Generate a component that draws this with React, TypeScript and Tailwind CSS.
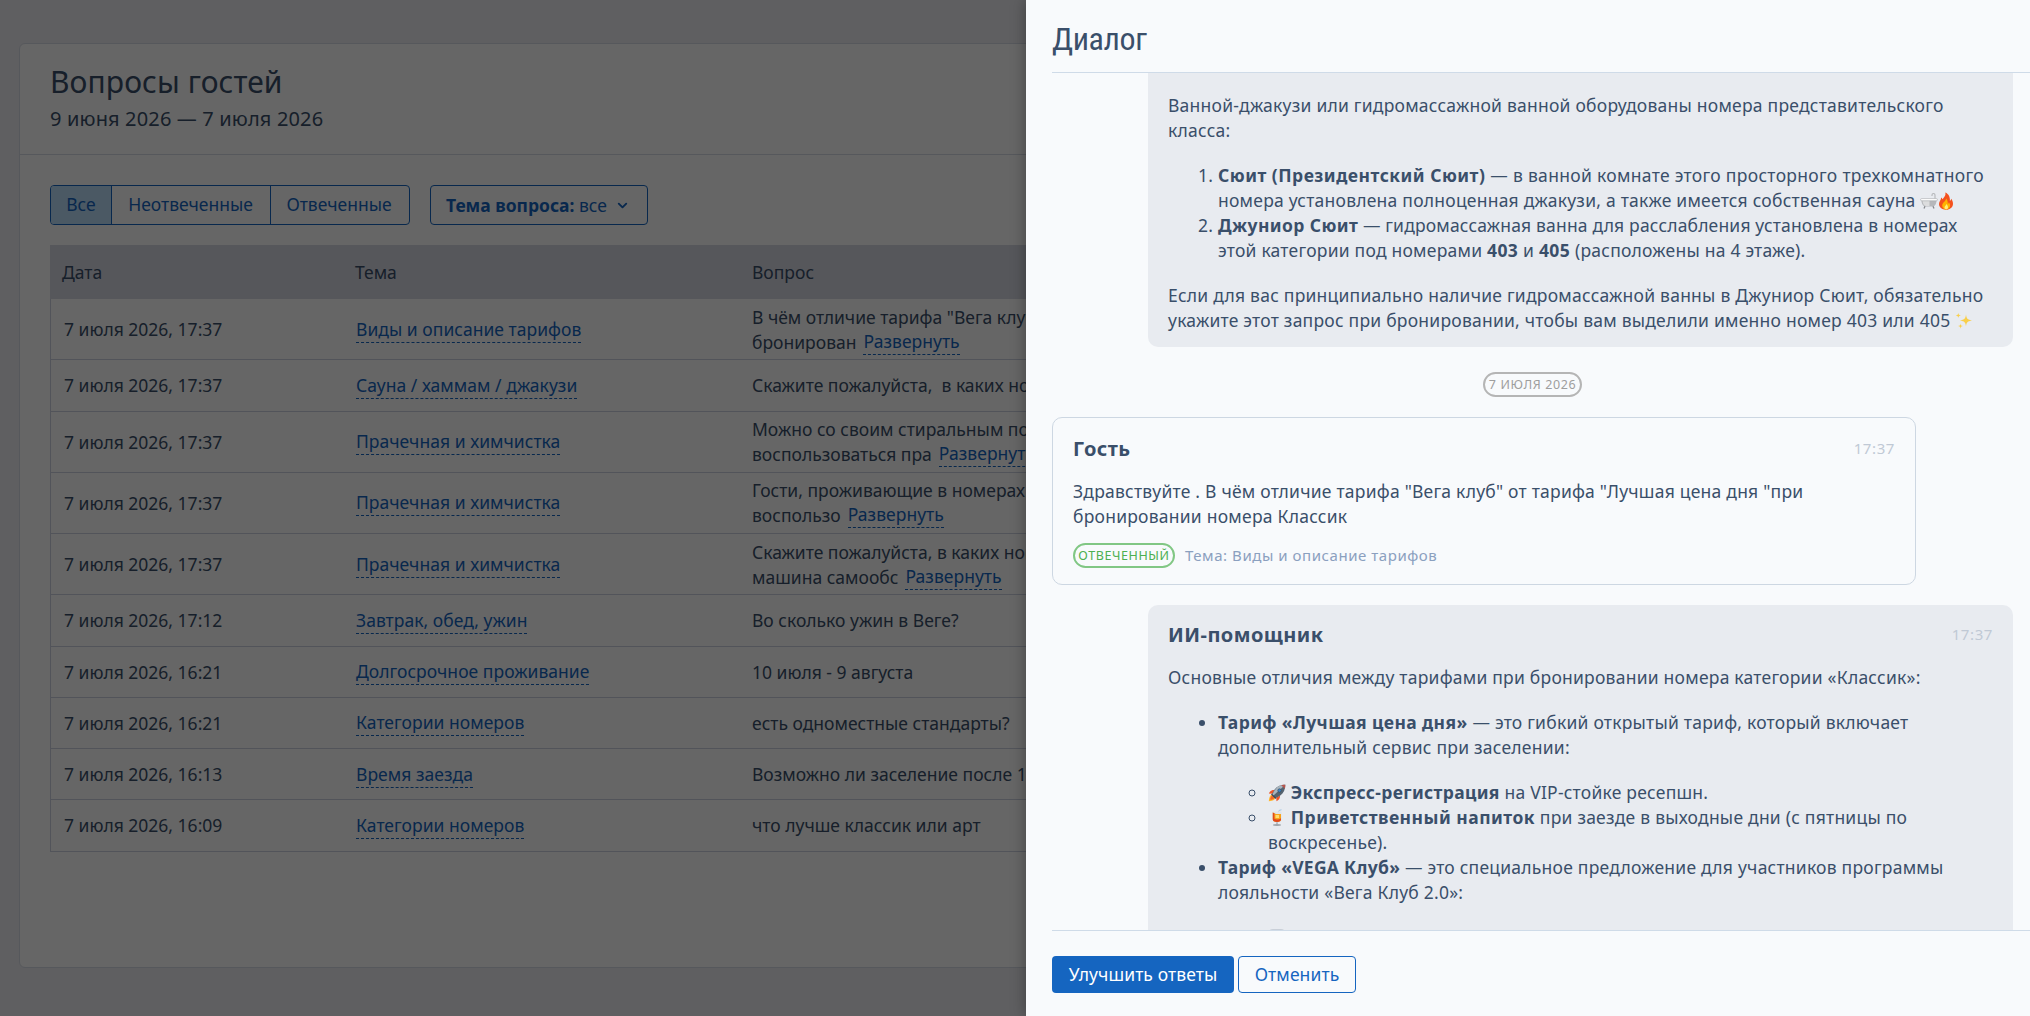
import { ChevronDown } from 'lucide-react'
import type { ReactNode } from 'react'

interface Row {
  date: string
  topic: string
  lines: string[]
  more?: boolean
}

const rows: Row[] = [
  { date: '7 июля 2026, 17:37', topic: 'Виды и описание тарифов', lines: ['В чём отличие тарифа "Вега клуб"', 'бронирован'], more: true },
  { date: '7 июля 2026, 17:37', topic: 'Сауна / хаммам / джакузи', lines: ['Скажите пожалуйста,  в каких номерах'] },
  { date: '7 июля 2026, 17:37', topic: 'Прачечная и химчистка', lines: ['Можно со своим стиральным порошком', 'воспользоваться пра'], more: true },
  { date: '7 июля 2026, 17:37', topic: 'Прачечная и химчистка', lines: ['Гости, проживающие в номерах', 'воспользо'], more: true },
  { date: '7 июля 2026, 17:37', topic: 'Прачечная и химчистка', lines: ['Скажите пожалуйста, в каких номерах', 'машина самообс'], more: true },
  { date: '7 июля 2026, 17:12', topic: 'Завтрак, обед, ужин', lines: ['Во сколько ужин в Веге?'] },
  { date: '7 июля 2026, 16:21', topic: 'Долгосрочное проживание', lines: ['10 июля - 9 августа'] },
  { date: '7 июля 2026, 16:21', topic: 'Категории номеров', lines: ['есть одноместные стандарты?'] },
  { date: '7 июля 2026, 16:13', topic: 'Время заезда', lines: ['Возможно ли заселение после 12'] },
  { date: '7 июля 2026, 16:09', topic: 'Категории номеров', lines: ['что лучше классик или арт'] },
]

function DashedLink({ children }: { children: ReactNode }) {
  return <a className="inline-block h-[25px] leading-[22px] border-b border-dashed border-[#1565c0] text-[#1565c0] tracking-[0.03px]">{children}</a>
}

function B({ children }: { children: ReactNode }) {
  return <b className="tracking-[0.4px]">{children}</b>
}

/* EMOJI */
function Bathtub() {
  return (
    <svg viewBox="0 0 18 18" className="inline-block w-[18px] h-[18px] align-[-3px]">
      <path d="M15 8V3c0-2-3-2-3 0v1" fill="none" stroke="#b4b7ba" strokeWidth="1.1" />
      <path d="M1.5 8h15c0 4-1.6 6.5-4.3 6.5H5.8C3.1 14.5 1.5 12 1.5 8Z" fill="#b6b8bb" />
      <path d="M2.500 8.500h7v5.500H5.800C3.900 13.800 2.800 12 2.500 8.500Z" fill="#dcddde" />
      <rect x=".6" y="6.6" width="16.8" height="2.2" rx="1.1" fill="#fff" stroke="#a5a8ab" strokeWidth=".6" />
      <path d="M5 14.300L4 16.600M13 14.300l1 2.300" stroke="#85888c" strokeWidth="1.3" />
    </svg>
  )
}

function Fire() {
  return (
    <svg viewBox="0 0 18 18" className="inline-block w-[18px] h-[18px] -ml-[1px] align-[-3px]">
      <path d="M8.300.5c.7 3.300-1.300 4.500-2.700 6.700-.5-.8-.8-1.300-1.500-1.800C4.200 8 2 9.300 2 12c0 3.400 3 5.700 7 5.700s7-2.500 7-6c0-2-.9-3.400-1.700-4.900-.2 1-.7 1.700-1.400 2.100C13.200 5.200 11.800 1.900 8.300.5Z" fill="#f4511e" />
      <path d="M9 6.500c.5 2.200-3.800 4-3.800 7.100 0 2.400 1.700 3.900 3.900 3.900s4-1.500 4-3.900c0-1.400-.5-2.400-1.200-3.300-.2.900-.5 1.400-1.100 1.700.1-2.300-.4-4.200-1.800-5.500Z" fill="#ffb300" />
      <path d="M9.200 12c.3 1.200-1.700 2-1.700 3.600 0 1.100.7 1.700 1.700 1.700s1.800-.7 1.800-1.800c0-1.300-.8-2.700-1.800-3.500Z" fill="#ffee7a" />
    </svg>
  )
}

function Sparkles() {
  return (
    <svg viewBox="0 0 18 18" className="inline-block w-[18px] h-[18px] align-[-3px]" fill="#f9cf4a">
      <path d="M11 2.500c.6 4.200 1.300 5.100 6 5.900-4.700.8-5.400 1.700-6 5.900-.6-4.200-1.300-5.100-6-5.900 4.700-.8 5.400-1.700 6-5.900Z" />
      <path d="M3.300.8c.3 1.900.6 2.300 2.600 2.600-2 .3-2.300.7-2.600 2.600C3 4.100 2.700 3.700.7 3.400 2.700 3.100 3 2.700 3.300.8ZM5.500 11.500c.3 1.900.6 2.300 2.600 2.600-2 .3-2.300.7-2.600 2.600-.3-1.900-.6-2.300-2.600-2.600 2-.3 2.300-.7 2.600-2.600Z" />
    </svg>
  )
}

function Rocket() {
  return (
    <svg viewBox="0 0 18 18" className="inline-block w-[18px] h-[18px] align-[-3px]">
      <path d="M4 10.500C1.800 11.500 1 14 .8 17.200c3.200-.2 5.600-1 6.500-3.300Z" fill="#ffb52b" />
      <path d="M4 11.500c-1.200.8-1.600 2.200-1.800 4.200 2-.1 3.400-.6 4.100-1.800Z" fill="#f4632a" />
      <path d="M6.500 6C3.800 5.700 2 7 .8 9.500l3.700.3ZM12 11.500c.3 2.700-1 4.500-3.500 5.700l-.3-3.700Z" fill="#f0562a" />
      <path d="M17.300.7C12.500.6 9 2.400 6.400 5.700L3.700 10.500l3.800 3.800 4.800-2.700c3.300-2.600 5.100-6.100 5-10.900Z" fill="#55636f" />
      <path d="M17.300.7C14 .6 11.500 1.400 9.300 3L6.500 6.500l-2.300 4.200 1 1Z" fill="#a9b5be" />
      <path d="M17.300.7c-1.500 0-2.900.1-4.100.5l3.600 3.600c.4-1.300.5-2.600.5-4.100Z" fill="#b5564e" />
      <circle cx="11.5" cy="6.5" r="1.7" fill="#3f86c6" stroke="#2f4258" strokeWidth=".6" />
      <path d="M3.500 10.200l4.300 4.300" stroke="#3b4855" strokeWidth="1.2" />
    </svg>
  )
}

function Drink() {
  return (
    <svg viewBox="0 0 18 18" className="inline-block w-[18px] h-[18px] align-[-3px]">
      <path d="M9.500 6l1.600-4.600 2.400-.6" fill="none" stroke="#9cc4e4" strokeWidth=".9" />
      <path d="M4.500 2.500h9v8c0 2-1.500 3-4.500 3s-4.500-1-4.500-3Z" fill="#dfe4e8" />
      <path d="M4.800 3.500L8 5h5v5.300c0 1.800-1.300 2.600-4 2.600s-4.200-.8-4.200-2.600Z" fill="#f9a51a" />
      <path d="M4.800 3.500l1.600.8v5.500c2 1 4.600.7 6.600-.6v1.100c0 1.800-1.300 2.600-4 2.600s-4.200-.8-4.200-2.600Z" fill="#e0491f" />
      <path d="M7.500 6h3.500v3H7.500z" fill="#ffdc6e" />
      <path d="M9 13.300v2.200" stroke="#aab2b9" strokeWidth="1.600" />
      <ellipse cx="9" cy="16" rx="4" ry=".9" fill="#9ea5ab" />
    </svg>
  )
}

/* DRAWER PARTS */
function MessageHeader({ author, time }: { author: string; time: string }) {
  return (
    <div className="flex items-center justify-between h-[30px]">
      <h3 className="text-[20px] leading-[30px] font-bold tracking-[0.45px]">{author}</h3>
      <span className="text-[15px] leading-[28px] pb-[2px] tracking-[0.6px] text-[#c0c9d5]">{time}</span>
    </div>
  )
}

export default function App() {
  return (
    <div className="relative w-[2030px] h-[1016px] overflow-hidden bg-[#eeeef3] font-['Noto_Sans',sans-serif] text-[17.5px] leading-[25px] text-[#3a4f6a]">
      {/* PAGE */}
      <div className="pt-[43px] pl-[19px]">
        <div className="h-[925px] bg-white border border-[#d8dce6] rounded-md">
          <div className="h-[111px] border-b border-[#d8dce6] pl-[30px] pt-[17px]">
            <h1 className="text-[30px] leading-[42px] tracking-[0.1px]">Вопросы гостей</h1>
            <p className="text-[20px] leading-[32px] tracking-[0.15px]">9 июня 2026 — 7 июля 2026</p>
          </div>

          <div className="pl-[30px] pt-[30px]">
            <div className="flex gap-[20px] text-[#1565c0] leading-[37px]">
              <div className="flex h-[40px] border border-[#1565c0] rounded-[4px] overflow-hidden">
                <div className="w-[60px] text-center bg-[#bbdefb]">Все</div>
                <div className="w-[159px] pr-[1px] text-center border-l border-[#1565c0]">Неотвеченные</div>
                <div className="w-[139px] pr-[2px] text-center border-l border-[#1565c0]">Отвеченные</div>
              </div>
              <div className="flex items-center h-[40px] w-[218px] pl-[15px] border border-[#1565c0] rounded-[4px] whitespace-pre">
                <b>Тема вопроса:</b> все
                <ChevronDown className="ml-[8px] w-[15px] h-[15px]" strokeWidth={3} />
              </div>
            </div>

            <div className="mt-[20px] w-[1300px]">
              <div className="flex items-center h-[54px] pt-[1px] bg-[#d7d9e4]">
                <div className="w-[305px] pl-[12px]">Дата</div>
                <div className="w-[397px]">Тема</div>
                <div>Вопрос</div>
              </div>
              {rows.map((row, i) => (
                <div
                  key={i}
                  className={`flex items-center border-b border-l border-[#cdd3e0] pt-[1px] ${row.more ? 'h-[61.25px]' : 'h-[51.25px]'}`}
                >
                  <div className="w-[305px] pl-[13px]">{row.date}</div>
                  <div className="w-[396px]">
                    <DashedLink>{row.topic}</DashedLink>
                  </div>
                  <div className="whitespace-pre">
                    <div>{row.lines[0]}</div>
                    {row.more && (
                      <div className="flex h-[25px] gap-[7px]">
                        <span>{row.lines[1]}</span>
                        <DashedLink>Развернуть</DashedLink>
                      </div>
                    )}
                  </div>
                </div>
              ))}
            </div>
          </div>
        </div>
      </div>

      {/* OVERLAY */}
      <div className="absolute inset-0 bg-black/60"></div>

      {/* DRAWER */}
      <div className="absolute top-0 right-0 w-[1004px] h-[1016px] flex flex-col bg-[#f8fafc] pl-[26px] shadow-[0_0_14px_rgba(0,0,0,0.35)]">
        <div className="h-[73px] shrink-0 border-b border-[#cfdbe8] pt-[18px]">
          <h2 className="font-['Roboto_Condensed',Roboto,sans-serif] [font-stretch:75%] text-[32px] leading-[42px] tracking-[-0.4px]">Диалог</h2>
        </div>

        <div className="flex-1 overflow-hidden tracking-[0.23px]">
          <div className="ml-[96px] -mt-[41px] w-[865px] h-[315px] rounded-[10px] bg-[#e8ebf0] px-[20px] pt-[16px]">
            <MessageHeader author="ИИ-помощник" time="17:36" />
            <p className="mt-[15px]">
              Ванной-джакузи или гидромассажной ванной оборудованы номера представительского
              <br />
              класса:
            </p>
            <ol className="mt-[20px] pl-[50px] list-decimal whitespace-nowrap">
              <li>
                <span className="tracking-[0.31px]">
                  <b className="tracking-[0.49px]">Сюит (Президентский Сюит)</b> — в ванной комнате этого просторного трехкомнатного
                </span>
                <br />
                номера установлена полноценная джакузи, а также имеется собственная сауна <Bathtub /><Fire />
              </li>
              <li>
                <span className="tracking-[0.17px]">
                  <B>Джуниор Сюит</B> — гидромассажная ванна для расслабления установлена в номерах
                </span>
                <br />
                этой категории под номерами <B>403</B> и <B>405</B> (расположены на 4 этаже).
              </li>
            </ol>
            <p className="mt-[20px] whitespace-nowrap">
              Если для вас принципиально наличие гидромассажной ванны в Джуниор Сюит, обязательно
              <br />
              укажите этот запрос при бронировании, чтобы вам выделили именно номер 403 или 405 <Sparkles />
            </p>
          </div>

          <div className="mt-[25px] w-[961px] flex justify-center">
            <span className="h-[25px] w-[99px] text-center rounded-full border-2 border-[#b5b5b5] text-[#9e9e9e] text-[12.5px] leading-[21px] tracking-[0.6px] whitespace-nowrap">
              7 ИЮЛЯ 2026
            </span>
          </div>

          <div className="mt-[20px] w-[864px] h-[168px] rounded-[10px] border border-[#cdd7e2] px-[20px] pt-[16px]">
            <MessageHeader author="Гость" time="17:37" />
            <p className="mt-[15px]">
              Здравствуйте . В чём отличие тарифа "Вега клуб" от тарифа "Лучшая цена дня "при
              <br />
              бронировании номера Классик
            </p>
            <div className="mt-[14px] flex items-center gap-[10px]">
              <span className="h-[25px] w-[102px] text-center rounded-full border-2 border-[#81c784] text-[#4caf50] text-[12.5px] leading-[21px] tracking-[0.6px] whitespace-nowrap">
                ОТВЕЧЕННЫЙ
              </span>
              <span className="text-[15px] tracking-[0.55px] text-[#8ba0bf]">Тема: Виды и описание тарифов</span>
            </div>
          </div>

          <div className="mt-[20px] ml-[96px] w-[865px] h-[500px] rounded-[10px] bg-[#e8ebf0] px-[20px] pt-[15px]">
            <MessageHeader author="ИИ-помощник" time="17:37" />
            <p className="mt-[15px]">Основные отличия между тарифами при бронировании номера категории «Классик»:</p>
            <ul className="mt-[20px] pl-[50px] list-disc whitespace-nowrap">
              <li>
                <B>Тариф «Лучшая цена дня»</B> — это гибкий открытый тариф, который включает
                <br />
                дополнительный сервис при заселении:
                <ul className="mt-[20px] pl-[50px] list-[circle]">
                  <li>
                    <Rocket /> <b className="tracking-[0.33px]">Экспресс-регистрация</b> на VIP-стойке ресепшн.
                  </li>
                  <li>
                    <Drink /> <b className="tracking-[0.48px]">Приветственный напиток</b> при заезде в выходные дни (с пятницы по
                    <br />
                    воскресенье).
                  </li>
                </ul>
              </li>
              <li>
                <b className="tracking-[0.28px]">Тариф «VEGA Клуб»</b> — это специальное предложение для участников программы
                <br />
                лояльности «Вега Клуб 2.0»:
                <div className="mt-[24px] ml-[51px] w-[16px] h-[16px] rounded-sm bg-[#c9cfd8]"></div>
              </li>
            </ul>
          </div>
        </div>

        {/* FOOTER */}
        <div className="h-[86px] shrink-0 border-t border-[#cfdbe8] pt-[25px] flex gap-[4px] leading-[34px] tracking-[0.1px]">
          <button className="w-[182px] h-[37px] pb-[2px] rounded-[4px] bg-[#1565c0] text-white">Улучшить ответы</button>
          <button className="w-[118px] h-[37px] pb-[1px] rounded-[4px] border border-[#1565c0] bg-[#f8fafc] text-[#1565c0]">Отменить</button>
        </div>
      </div>
    </div>
  )
}
